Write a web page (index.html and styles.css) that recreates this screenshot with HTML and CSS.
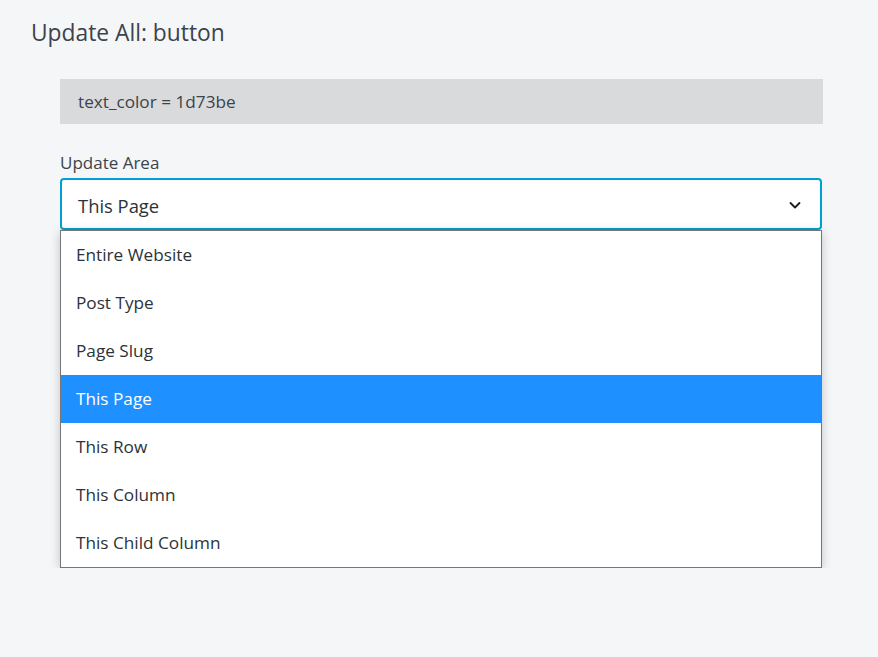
FILE: index.html
```html
<!DOCTYPE html>
<html>
<head>
<meta charset="utf-8">
<link rel="stylesheet" href="styles.css">
</head>
<body>
<div class="page">
  <h1 class="title">Update All: button</h1>
  <div class="content">
    <div class="info">text_color = 1d73be</div>
    <div class="field">
      <div class="label">Update Area</div>
      <div class="select">
        <span>This Page</span>
        <svg class="chev" width="14" height="14" viewBox="0 0 14 14"><path d="M2.5 5 L7 9.5 L11.5 5" fill="none" stroke="#1a1a1a" stroke-width="1.8" stroke-linecap="round" stroke-linejoin="round"/></svg>
      </div>
      <div class="options">
        <div class="opt">Entire Website</div>
        <div class="opt">Post Type</div>
        <div class="opt">Page Slug</div>
        <div class="opt active">This Page</div>
        <div class="opt">This Row</div>
        <div class="opt">This Column</div>
        <div class="opt">This Child Column</div>
      </div>
    </div>
  </div>
</div>
</body>
</html>
```
FILE: styles.css
```css
html, body {
  margin: 0;
  padding: 0;
  background: #f5f6f8;
  font-family: "Open Sans", "Noto Sans", sans-serif;
  color: #3c434a;
}
.page {
  padding: 18px 0 0 31px;
  width: 792px;
}
.title {
  margin: 0;
  font-size: 22.8px;
  font-weight: 400;
  line-height: 30px;
  color: #3c434a;
}
.content {
  padding: 31px 0 0 29px;
}
.info {
  background: #d9dadc;
  height: 45px;
  line-height: 45px;
  padding-left: 18px;
  font-size: 17.2px;
  color: #3c434a;
}
.field {
  margin-top: 28px;
  width: 762px;
}
.label {
  font-size: 17px;
  line-height: 22px;
  color: #3c434a;
  margin-bottom: 4px;
}
.select {
  box-sizing: border-box;
  height: 52px;
  border: 2px solid #00a0d2;
  border-radius: 4px;
  background: #fff;
  display: flex;
  align-items: center;
  justify-content: space-between;
  padding: 2px 18px 0 16px;
  font-size: 18.4px;
  color: #2c3338;
}
.chev {
  display: block;
}
.options {
  box-sizing: border-box;
  width: 762px;
  background: #fff;
  border: 1px solid #767676;
  box-shadow: 0 2px 10px rgba(0,0,0,0.2);
}
.opt {
  height: 48px;
  line-height: 48px;
  padding-left: 15px;
  font-size: 17.2px;
  color: #2c3338;
}
.opt.active {
  background: #1e90ff;
  color: #fff;
}
```
